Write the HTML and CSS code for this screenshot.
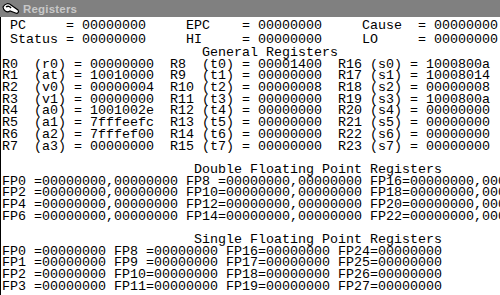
FILE: index.html
```html
<!DOCTYPE html>
<html lang="en">
<head>
    <meta charset="UTF-8">
    <meta name="viewport" content="width=device-width, initial-scale=1.0">
    <title>Registers</title>
    <link rel="stylesheet" href="styles.css">
</head>
<body>
    <div class="window">
        <div class="titlebar">
            <svg class="icon" width="18" height="13" viewBox="0 0 18 13">
                <path d="M1 5 C3 1 7 1 9 3 L16 8 C17.5 10 15.5 12 13.5 11 L8 9 C5 11 1.5 9 1 5 Z" fill="#fff" stroke="#000" stroke-width="1.2"/>
                <path d="M4 5 C6 3.5 8 4.5 9 6" fill="none" stroke="#000" stroke-width="1.4"/>
            </svg>
            <span class="caption">Registers</span>
        </div>
        <div class="panel">
            <div class="special">
                <div class="line"> PC     = 00000000     EPC    = 00000000     Cause  = 00000000</div>
                <div class="line"> Status = 00000000     HI     = 00000000     LO     = 00000000</div>
            </div>
            <div class="regs">
                <div class="line">                         General Registers</div>
                <div class="line">R0  (r0) = 00000000  R8  (t0) = 00001400  R16 (s0) = 1000800a</div>
                <div class="line">R1  (at) = 10010000  R9  (t1) = 00000000  R17 (s1) = 10008014</div>
                <div class="line">R2  (v0) = 00000004  R10 (t2) = 00000008  R18 (s2) = 00000008</div>
                <div class="line">R3  (v1) = 00000000  R11 (t3) = 00000000  R19 (s3) = 1000800a</div>
                <div class="line">R4  (a0) = 1001002e  R12 (t4) = 00000000  R20 (s4) = 00000000</div>
                <div class="line">R5  (a1) = 7fffeefc  R13 (t5) = 00000000  R21 (s5) = 00000000</div>
                <div class="line">R6  (a2) = 7fffef00  R14 (t6) = 00000000  R22 (s6) = 00000000</div>
                <div class="line">R7  (a3) = 00000000  R15 (t7) = 00000000  R23 (s7) = 00000000</div>
                <div class="line"> </div>
                <div class="line">                        Double Floating Point Registers</div>
                <div class="line">FP0 =00000000,00000000 FP8 =00000000,00000000 FP16=00000000,00000000 FP24=00000000,00000000</div>
                <div class="line">FP2 =00000000,00000000 FP10=00000000,00000000 FP18=00000000,00000000 FP26=00000000,00000000</div>
                <div class="line">FP4 =00000000,00000000 FP12=00000000,00000000 FP20=00000000,00000000 FP28=00000000,00000000</div>
                <div class="line">FP6 =00000000,00000000 FP14=00000000,00000000 FP22=00000000,00000000 FP30=00000000,00000000</div>
                <div class="line"> </div>
                <div class="line">                        Single Floating Point Registers</div>
                <div class="line">FP0 =00000000 FP8 =00000000 FP16=00000000 FP24=00000000</div>
                <div class="line">FP1 =00000000 FP9 =00000000 FP17=00000000 FP25=00000000</div>
                <div class="line">FP2 =00000000 FP10=00000000 FP18=00000000 FP26=00000000</div>
                <div class="line">FP3 =00000000 FP11=00000000 FP19=00000000 FP27=00000000</div>
            </div>
        </div>
    </div>
</body>
</html>
```

FILE: styles.css
```css
html, body {
    margin: 0;
    padding: 0;
    background: #fff;
}

body {
    width: 500px;
    height: 295px;
    overflow: hidden;
}

.window {
    width: 500px;
    height: 295px;
    overflow: hidden;
    display: flex;
    flex-direction: column;
}

.titlebar {
    height: 17px;
    flex: none;
    background: #808080;
    display: flex;
    align-items: center;
    gap: 3px;
    padding-left: 2px;
}

.icon {
    display: block;
}

.caption {
    font-family: 'Liberation Sans', Arial, sans-serif;
    font-weight: bold;
    font-size: 11.5px;
    color: #c8c8c8;
    letter-spacing: 0.2px;
}

.panel {
    flex: 1;
    border-left: 1px solid #000;
    padding: 2px 0 0 1px;
    font-family: 'Liberation Mono', 'Courier New', monospace;
    font-size: 13.33px;
    color: #000;
}

.line {
    white-space: pre;
}

.special .line {
    height: 14px;
    line-height: 14px;
}

.regs .line {
    height: 11.7px;
    line-height: 11.7px;
}
```
